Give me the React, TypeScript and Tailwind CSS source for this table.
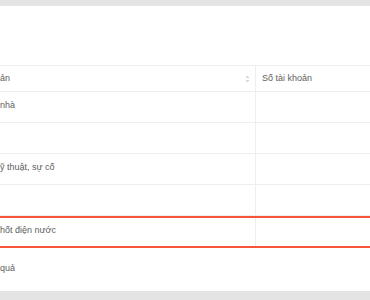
import { ReactNode } from "react";

const rows = ["nhà", "", "ỹ thuật, sự cố", "", "hốt điện nước"];

function SortIcon() {
  return (
    <svg width="5" height="8" viewBox="0 0 5 8" className="shrink-0">
      <path d="M2.5 0.5 L4.5 3 L0.5 3 Z" fill="#d0d3d8" />
      <path d="M2.5 7.5 L4.5 5 L0.5 5 Z" fill="#d0d3d8" />
    </svg>
  );
}

function Row({ name, highlight, children }: { name: string; highlight?: boolean; children?: ReactNode }) {
  return (
    <div
      className={
        highlight
          ? "flex h-[32px] border-y-2 border-[#f6553a]"
          : "flex h-[31px] border-b border-[#eceef2]"
      }
    >
      <div className="w-[256px] flex items-center border-r border-[#eceef2] pb-[2px]">{name}</div>
      <div className="flex-1 flex items-center pl-[6px]">{children}</div>
    </div>
  );
}

export default function App() {
  return (
    <div
      className="w-[370px] h-[300px] bg-[#e4e4e4] pt-[6px] pb-[9px] overflow-hidden text-[9px] text-[#606060]"
      style={{ fontFamily: '"Liberation Sans", Arial, sans-serif' }}
    >
      <div className="h-full bg-white flex flex-col">
        <div className="h-[59px]" />

        {/* table header */}
        <div className="flex h-[27px] border-y border-[#eceef2]">
          <div className="w-[256px] flex items-center justify-between pr-[5px] border-r border-[#eceef2]">
            <span>ản</span>
            <SortIcon />
          </div>
          <div className="flex-1 flex items-center pl-[6px]">Số tài khoản</div>
        </div>

        {rows.map((r, i) => (
          <Row key={i} name={r} highlight={i === rows.length - 1} />
        ))}

        {/* summary line under the table */}
        <div className="flex-1 flex items-center pb-[2px]">quả</div>
      </div>
    </div>
  );
}
